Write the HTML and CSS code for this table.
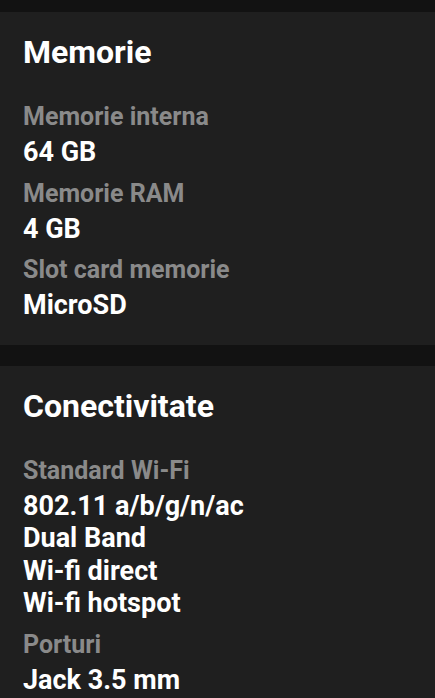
FILE: index.html
```html
<!DOCTYPE html>
<html lang="ro">
<head>
<meta charset="utf-8">
<title>Specificații</title>
<link rel="stylesheet" href="styles.css">
</head>
<body>
<div class="page">
  <section class="card">
    <h2 class="card-title">Memorie</h2>
    <div class="spec">
      <div class="spec-label">Memorie interna</div>
      <div class="spec-value">64 GB</div>
    </div>
    <div class="spec">
      <div class="spec-label">Memorie RAM</div>
      <div class="spec-value">4 GB</div>
    </div>
    <div class="spec">
      <div class="spec-label">Slot card memorie</div>
      <div class="spec-value">MicroSD</div>
    </div>
  </section>
  <section class="card">
    <h2 class="card-title">Conectivitate</h2>
    <div class="spec">
      <div class="spec-label">Standard Wi-Fi</div>
      <div class="spec-value">802.11 a/b/g/n/ac<br>Dual Band<br>Wi-fi direct<br>Wi-fi hotspot</div>
    </div>
    <div class="spec">
      <div class="spec-label">Porturi</div>
      <div class="spec-value">Jack 3.5 mm</div>
    </div>
  </section>
</div>
</body>
</html>
```
FILE: styles.css
```css
html, body {
  margin: 0;
  padding: 0;
  background: #121212;
}
body {
  font-family: Roboto, "Noto Sans", sans-serif;
  overflow: hidden;
}
.page {
  display: flex;
  flex-direction: column;
  gap: 21px;
  padding-top: 12px;
}
.card {
  background: #1f1f1f;
  padding: 20px 23px 23px;
}
.card-title {
  margin: 0 0 29px;
  font-size: 32px;
  line-height: 40px;
  font-weight: 700;
  color: #ffffff;
}
.spec {
  display: flex;
  flex-direction: column;
  gap: 3px;
  margin-bottom: 9px;
}
.spec:last-child {
  margin-bottom: 0;
}
.spec-label {
  font-size: 25px;
  line-height: 32px;
  font-weight: 700;
  color: #8a8a8a;
}
.spec-value {
  font-size: 27px;
  line-height: 32.5px;
  font-weight: 700;
  color: #ffffff;
}
```
